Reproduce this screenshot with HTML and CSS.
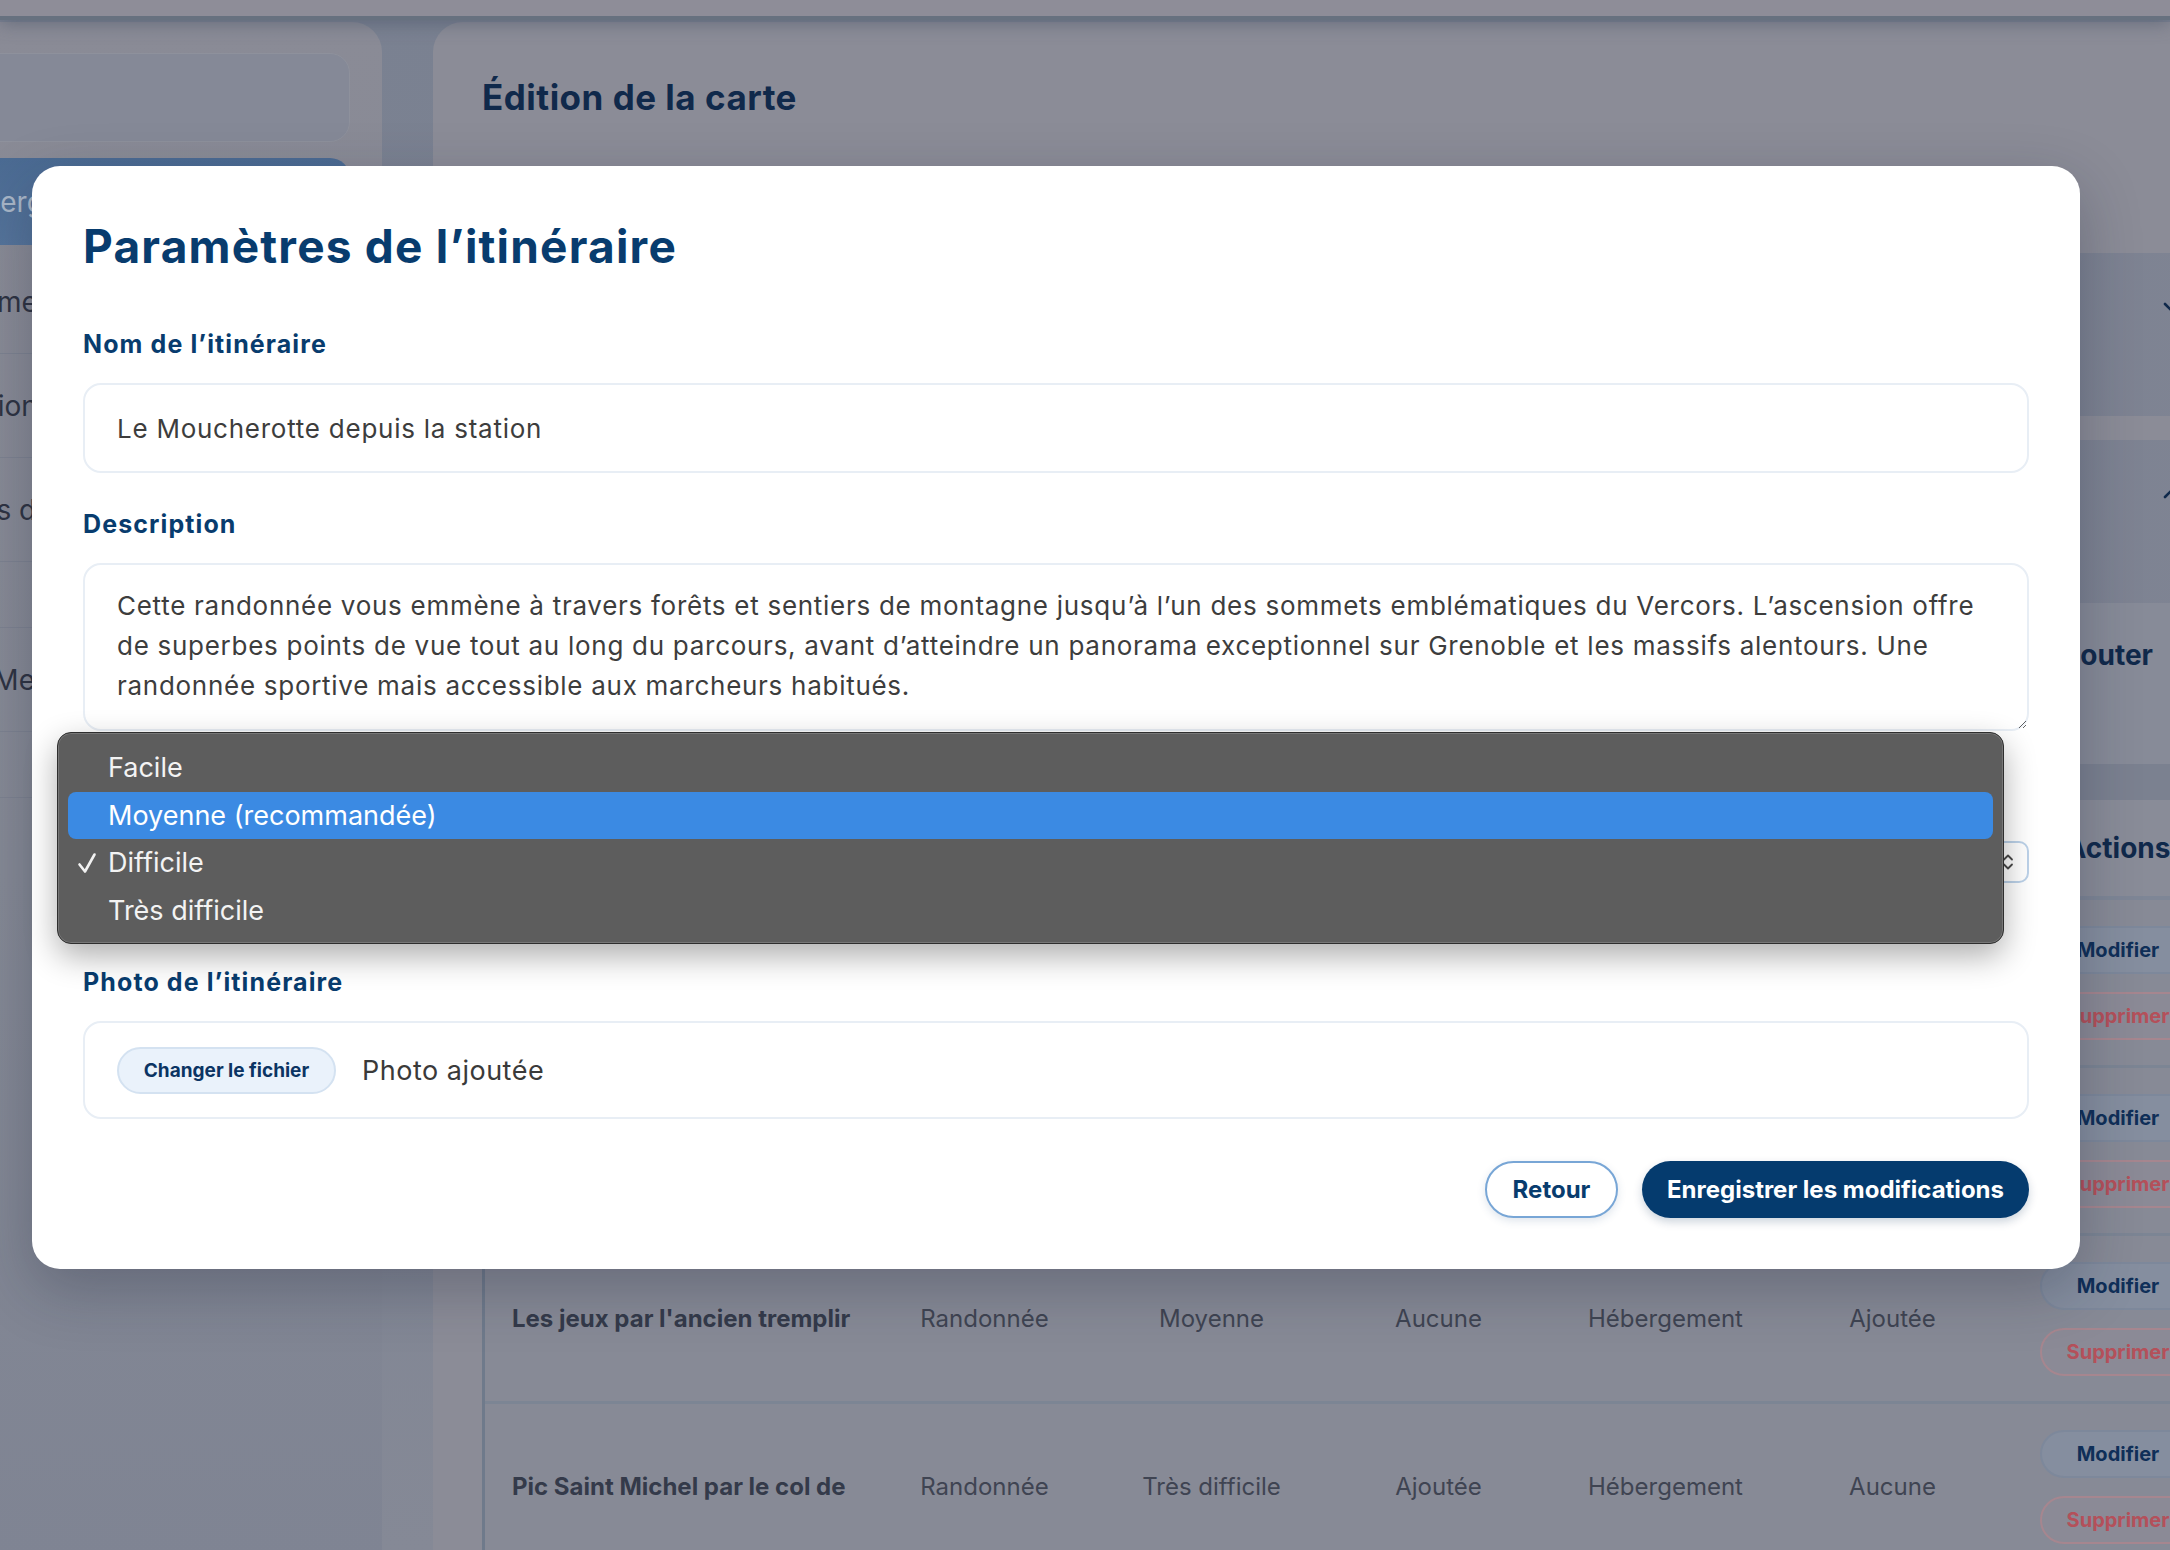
FILE: index.html
```html
<!DOCTYPE html>
<html lang="fr">
<head>
<meta charset="utf-8">
<title>Édition de la carte</title>
<link rel="stylesheet" href="styles.css">
</head>
<body>
<div class="page">
  <header class="topbar"></header>
  <div class="layout">
    <aside class="sidebar">
      <div class="sb-brand"></div>
      <nav class="sb-nav">
        <a class="sb-item active">Hébergements</a>
        <a class="sb-item">Thème</a>
        <a class="sb-item sb-item-wide">Options</a>
        <a class="sb-item">Infos du site</a>
        <a class="sb-item sb-spacer"></a>
        <a class="sb-item sb-item-narrow">Vos Messages</a>
        <a class="sb-item sb-spacer"></a>
      </nav>
    </aside>
    <main class="main-card">
      <h1 class="main-title">Édition de la carte</h1>
      <section class="accordion">
        <span class="acc-title">Informations générales</span>
        <svg class="chev" viewBox="0 0 24 24" width="24" height="24"><path d="M5 9l7 7 7-7" fill="none" stroke="#10294b" stroke-width="2.6" stroke-linecap="round" stroke-linejoin="round"/></svg>
      </section>
      <section class="accordion">
        <span class="acc-title">Apparence de la carte</span>
        <svg class="chev" viewBox="0 0 24 24" width="24" height="24"><path d="M5 15l7-7 7 7" fill="none" stroke="#10294b" stroke-width="2.6" stroke-linecap="round" stroke-linejoin="round"/></svg>
      </section>
      <div class="toolbar">
        <span class="toolbar-title">Itinéraires</span>
        <button class="toolbar-btn">Ajouter</button>
      </div>
      <div class="table">
        <div class="t-head">
          <span class="th-name">Nom</span>
          <span class="th">Type</span>
          <span class="th">Difficulté</span>
          <span class="th">Photo</span>
          <span class="th">Catégorie</span>
          <span class="th">Tracé</span>
          <span class="th">Actions</span>
        </div>
        <div class="t-row">
          <span class="t-name">Le Moucherotte depuis la station</span>
          <span class="t-cell">Randonnée</span>
          <span class="t-cell">Difficile</span>
          <span class="t-cell">Ajoutée</span>
          <span class="t-cell">Hébergement</span>
          <span class="t-cell">Ajoutée</span>
          <span class="t-actions"><span class="pill pill-edit">Modifier</span><span class="pill pill-del">Supprimer</span></span>
        </div>
        <div class="t-row">
          <span class="t-name">Tour des Trois Pucelles</span>
          <span class="t-cell">Randonnée</span>
          <span class="t-cell">Facile</span>
          <span class="t-cell">Aucune</span>
          <span class="t-cell">Hébergement</span>
          <span class="t-cell">Ajoutée</span>
          <span class="t-actions"><span class="pill pill-edit">Modifier</span><span class="pill pill-del">Supprimer</span></span>
        </div>
        <div class="t-row">
          <span class="t-name">Les jeux par l'ancien tremplir</span>
          <span class="t-cell">Randonnée</span>
          <span class="t-cell">Moyenne</span>
          <span class="t-cell">Aucune</span>
          <span class="t-cell">Hébergement</span>
          <span class="t-cell">Ajoutée</span>
          <span class="t-actions"><span class="pill pill-edit">Modifier</span><span class="pill pill-del">Supprimer</span></span>
        </div>
        <div class="t-row">
          <span class="t-name">Pic Saint Michel par le col de</span>
          <span class="t-cell">Randonnée</span>
          <span class="t-cell">Très difficile</span>
          <span class="t-cell">Ajoutée</span>
          <span class="t-cell">Hébergement</span>
          <span class="t-cell">Aucune</span>
          <span class="t-actions"><span class="pill pill-edit">Modifier</span><span class="pill pill-del">Supprimer</span></span>
        </div>
      </div>
    </main>
  </div>
</div>

<div class="overlay">
  <div class="modal" role="dialog" aria-labelledby="modal-title">
    <h2 id="modal-title" class="modal-title">Paramètres de l’itinéraire</h2>

    <div class="field">
      <label class="field-label">Nom de l’itinéraire</label>
      <input class="input" type="text" value="Le Moucherotte depuis la station">
    </div>

    <div class="field">
      <label class="field-label">Description</label>
      <textarea class="textarea">Cette randonnée vous emmène à travers forêts et sentiers de montagne jusqu’à l’un des sommets emblématiques du Vercors. L’ascension offre de superbes points de vue tout au long du parcours, avant d’atteindre un panorama exceptionnel sur Grenoble et les massifs alentours. Une randonnée sportive mais accessible aux marcheurs habitués.</textarea>
    </div>

    <div class="field">
      <label class="field-label">Difficulté</label>
      <div class="select">
        <span class="select-value">Difficile</span>
        <svg class="select-arrows" viewBox="0 0 12 20" width="12" height="20"><path d="M2 7.5L6 3.5l4 4M2 12.5l4 4 4-4" fill="none" stroke="#4a4a4a" stroke-width="1.8" stroke-linecap="round" stroke-linejoin="round"/></svg>
      </div>
      <p class="field-help">Le niveau choisi est affiché sur la fiche de l’itinéraire.</p>
    </div>

    <div class="field">
      <label class="field-label">Photo de l’itinéraire</label>
      <div class="filebox">
        <span class="file-btn">Changer le fichier</span>
        <span class="file-name">Photo ajoutée</span>
      </div>
    </div>

    <div class="modal-actions">
      <button class="btn btn-outline">Retour</button>
      <button class="btn btn-primary">Enregistrer les modifications</button>
    </div>

    <ul class="dropdown" role="listbox">
      <li class="dd-item"><span class="dd-check"></span>Facile</li>
      <li class="dd-item hover"><span class="dd-check"></span>Moyenne (recommandée)</li>
      <li class="dd-item"><span class="dd-check"><svg viewBox="0 0 20 22" width="20" height="22"><path d="M2.5 12.5L8 19.5 17.5 2.5" fill="none" stroke="#f2f2f2" stroke-width="2.6" stroke-linecap="round" stroke-linejoin="round"/></svg></span>Difficile</li>
      <li class="dd-item"><span class="dd-check"></span>Très difficile</li>
    </ul>
  </div>
</div>
</body>
</html>
```

FILE: styles.css
```css
* { box-sizing: border-box; }

html, body {
  margin: 0;
  padding: 0;
}

body {
  width: 2170px;
  height: 1550px;
  overflow: hidden;
  position: relative;
  font-family: Inter, "Noto Sans", "Liberation Sans", sans-serif;
  background: linear-gradient(180deg, #7a8191 0%, #7e8493 60%, #858996 100%);
}

/* ---------- background page (dimmed by the modal backdrop) ---------- */
.page {
  height: 1550px;
  overflow: hidden;
}

.topbar {
  height: 20px;
  background: #8e8d98;
  border-bottom: 4px solid #67717f;
  box-shadow: 0 3px 18px rgba(70, 80, 100, 0.55);
  position: relative;
  z-index: 1;
}

.layout {
  display: flex;
  gap: 51px;
  padding-top: 2px;
}

.sidebar {
  flex: 0 0 520px;
  margin-left: -138px;
  height: 1540px;
  padding: 31px 32px 0 32px;
  border-radius: 30px 30px 0 0;
  background: linear-gradient(180deg, #8a8b96 0%, #858995 55%, #7f8493 100%);
}

.sb-brand {
  height: 89px;
  border-radius: 20px;
  background: #858997;
  border: 1px solid #8e919c;
}

.sb-nav {
  margin-top: 16px;
  display: flex;
  flex-direction: column;
}

.sb-item {
  display: flex;
  align-items: center;
  height: 104px;
  padding-left: 52px;
  font-size: 28px;
  color: #2e3342;
  white-space: nowrap;
  border-bottom: 1px solid #7d8290;
}

.sb-item-wide { padding-left: 56px; }
.sb-item-narrow { padding-left: 42px; }

.sb-item.active {
  height: 87px;
  margin-bottom: 5px;
  border-radius: 20px 20px 0 0;
  border-bottom: none;
  background: linear-gradient(180deg, #4b6b93 0%, #55749b 100%);
  color: #a9b7c8;
}

.sb-item.sb-spacer {
  height: 66px;
}

.main-card {
  flex: 0 0 1846px;
  height: 1540px;
  padding: 53px 49px 0;
  border-radius: 30px 30px 0 0;
  background: #8b8c97;
}

.main-title {
  margin: 0;
  font-size: 35px;
  line-height: 44px;
  font-weight: 700;
  color: #10294b;
  letter-spacing: 0.5px;
}

.accordion {
  margin-top: 134px;
  height: 163px;
  display: flex;
  justify-content: space-between;
  align-items: flex-start;
  padding: 42px 46px 0 40px;
  background: linear-gradient(90deg, #798090 0%, #7b8191 80%, #7f8493 100%);
}

.accordion + .accordion {
  margin-top: 24px;
}

.acc-title {
  font-size: 28px;
  font-weight: 700;
  color: #10294b;
}

.chev { display: block; }

.toolbar {
  height: 161px;
  display: flex;
  justify-content: space-between;
  align-items: flex-start;
  padding: 32px 77px 0 40px;
  background: #878b98;
}

.toolbar-title {
  font-size: 28px;
  font-weight: 700;
  color: #10294b;
  line-height: 40px;
}

.toolbar-btn {
  border: none;
  background: transparent;
  padding: 0;
  font-family: inherit;
  font-size: 28px;
  line-height: 40px;
  font-weight: 700;
  color: #10294b;
}

.table {
  padding-top: 36px;
  background: #7b8190;
  border-left: 3px solid #6f7a8b;
}

.t-head,
.t-row {
  display: grid;
  grid-template-columns: 386px repeat(5, 227px) 1fr;
  align-items: center;
}

.t-head {
  height: 100px;
  background: #898c98;
  border-bottom: 4px solid #7e8696;
}

.th-name {
  padding-left: 27px;
  font-size: 28px;
  font-weight: 700;
  color: #10294b;
}

.th {
  text-align: center;
  font-size: 28px;
  font-weight: 700;
  color: #10294b;
}

.t-row {
  height: 168px;
  background: #878a96;
  border-bottom: 3px solid #7c8594;
}

.t-name {
  padding-left: 27px;
  font-size: 24px;
  font-weight: 700;
  color: #343a4a;
  white-space: nowrap;
  overflow: hidden;
}

.t-cell {
  text-align: center;
  font-size: 24px;
  color: #3f4452;
}

.t-actions {
  display: flex;
  flex-direction: column;
  align-items: center;
  gap: 18px;
}

.pill {
  width: 156px;
  height: 48px;
  border-radius: 24px;
  display: flex;
  align-items: center;
  justify-content: center;
  font-size: 20px;
  font-weight: 700;
}

.pill-edit {
  background: #858e9f;
  border: 2px solid #7d889b;
  color: #0f2f58;
}

.pill-del {
  background: #8b8a96;
  border: 2px solid #a6868f;
  color: #b4505a;
}

/* ---------- modal ---------- */
.overlay {
  position: absolute;
  inset: 0;
  padding: 166px 0 0 32px;
}

.modal {
  position: relative;
  width: 2048px;
  padding: 53px 51px 51px;
  background: #ffffff;
  border-radius: 28px;
  box-shadow: 0 20px 60px rgba(20, 30, 50, 0.28);
}

.modal-title {
  margin: 0 0 56px;
  font-size: 46px;
  line-height: 54px;
  font-weight: 700;
  color: #083c6e;
  letter-spacing: 1.2px;
}

.field {
  display: flex;
  flex-direction: column;
  margin-bottom: 36px;
}

.field-label {
  font-size: 25px;
  line-height: 30px;
  font-weight: 700;
  color: #083c6e;
  margin-bottom: 24px;
  letter-spacing: 1.1px;
}

.input {
  height: 90px;
  padding: 0 32px;
  border: 2px solid #e8eef5;
  border-radius: 18px;
  font-family: inherit;
  font-size: 26px;
  letter-spacing: 0.75px;
  color: #3d3d3d;
  background: #fff;
  outline: none;
}

.textarea {
  height: 168px;
  padding: 21px 32px 0;
  border: 2px solid #e8eef5;
  border-radius: 18px;
  font-family: inherit;
  font-size: 26px;
  letter-spacing: 0.72px;
  line-height: 40px;
  color: #3d3d3d;
  background: #fff;
  outline: none;
  resize: vertical;
}

.select {
  margin-top: 20px;
  height: 42px;
  display: flex;
  align-items: center;
  justify-content: space-between;
  padding: 0 13px 0 16px;
  border: 2px solid #bcd2e9;
  border-radius: 10px;
  font-size: 22px;
  color: #222;
}

.select-arrows { display: block; }

.field-help {
  margin: 20px 0 0;
  font-size: 20px;
  line-height: 28px;
  color: #6b7280;
}

.filebox {
  height: 98px;
  display: flex;
  align-items: center;
  gap: 26px;
  padding-left: 32px;
  border: 2px solid #e8eef5;
  border-radius: 18px;
}

.file-btn {
  width: 219px;
  height: 47px;
  display: flex;
  align-items: center;
  justify-content: center;
  background: #eaf2fb;
  border: 2px solid #d4e2f1;
  border-radius: 24px;
  font-size: 19px;
  font-weight: 700;
  color: #0b3463;
}

.file-name {
  font-size: 27px;
  letter-spacing: 0.5px;
  color: #3a3a3a;
}

.modal-actions {
  margin-top: 42px;
  display: flex;
  justify-content: flex-end;
  gap: 24px;
}

.btn {
  height: 57px;
  border-radius: 29px;
  font-family: inherit;
  font-size: 24px;
  font-weight: 700;
  cursor: pointer;
}

.btn-outline {
  width: 133px;
  background: #fff;
  border: 2px solid #78a6d6;
  color: #083c6e;
  box-shadow: 0 3px 8px rgba(40, 80, 130, 0.15);
}

.btn-primary {
  width: 387px;
  background: #053b6e;
  border: none;
  color: #fff;
  box-shadow: 0 4px 10px rgba(5, 40, 80, 0.2);
}

/* native-like open select popup */
.dropdown {
  position: absolute;
  left: 25px;
  top: 566px;
  width: 1947px;
  height: 212px;
  margin: 0;
  padding: 11px 10px;
  list-style: none;
  background: #5d5d5d;
  border: 1px solid #2e2e2e;
  border-radius: 14px;
  box-shadow: inset 0 0 0 1px rgba(255, 255, 255, 0.16), 0 12px 32px rgba(0, 0, 0, 0.32);
}

.dd-item {
  height: 47.5px;
  display: flex;
  align-items: center;
  font-size: 27px;
  color: #f3f3f3;
  border-radius: 8px;
}

.dd-item.hover {
  background: #3b8ae3;
  color: #ffffff;
}

.dd-check {
  width: 40px;
  padding-left: 9px;
  display: flex;
  align-items: center;
}

.dd-check svg { display: block; }
```
